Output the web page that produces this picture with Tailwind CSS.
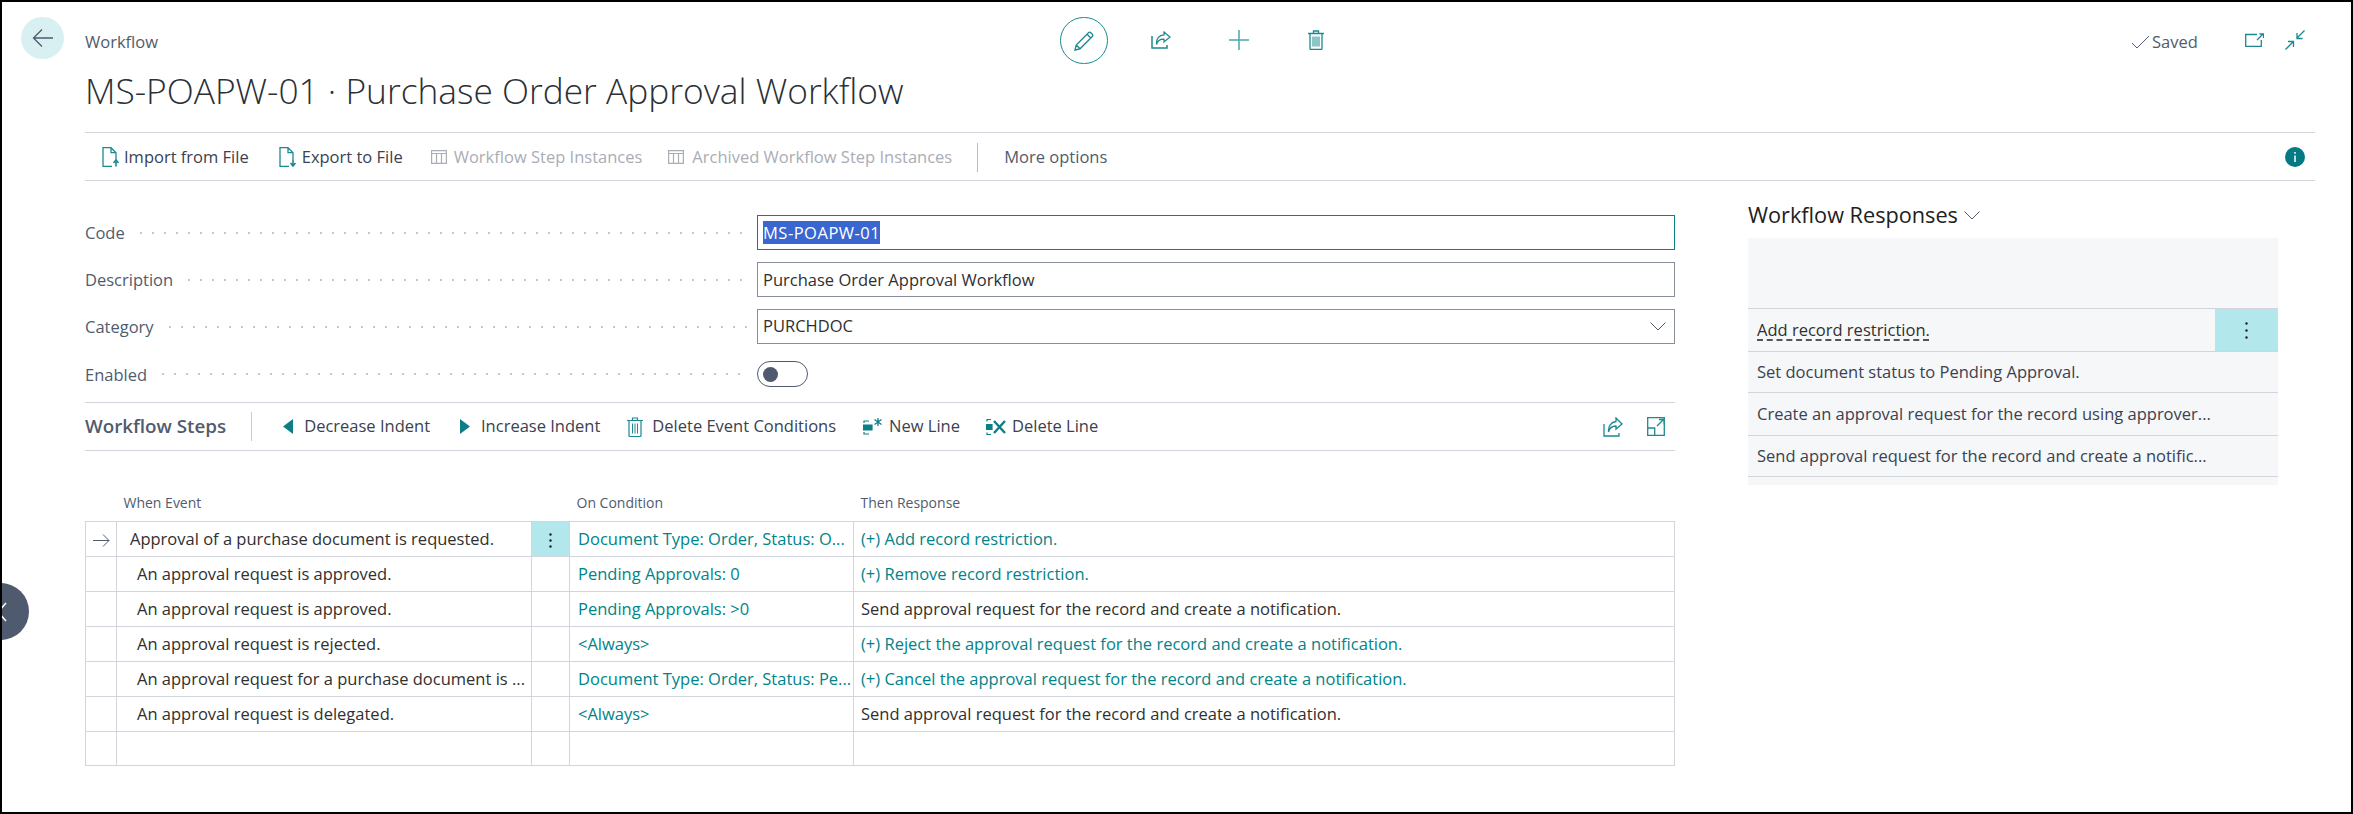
<!DOCTYPE html>
<html lang="en">
<head>
<meta charset="UTF-8">
<title>Workflow</title>
<script src="https://cdn.jsdelivr.net/npm/@tailwindcss/browser@4"></script>
</head>
<body class="bg-white">
<div class="relative w-[2353px] h-[814px] overflow-hidden border-2 border-black bg-white font-['Open_Sans',sans-serif] text-[16.5px] text-[#3a4150]">

  <!-- collapsed side tab -->
  <div class="absolute left-[-30px] top-[581px] w-[57px] h-[57px] rounded-full bg-[#505a6e]">
    <svg class="absolute left-[22px] top-[19px]" width="14" height="20" viewBox="0 0 14 20" fill="none" stroke="#fff" stroke-width="1.5"><path d="M12 1 4 10l8 9"/></svg>
  </div>

  <!-- header -->
  <div class="h-[130px]">
    <div class="flex items-start pt-[15px] h-[64px]">
      <button class="ml-[19px] w-[43px] h-[42px] rounded-full bg-[#d9f0f2] flex items-center justify-center">
        <svg width="22" height="20" viewBox="0 0 22 20" fill="none" stroke="#505a6e" stroke-width="1.3"><path d="M21 10H1.5M10 1.5 1.5 10l8.500 8.500"/></svg>
      </button>
      <span class="ml-[21px] mt-[14px] w-[975px] text-[#505c6e] leading-[22px]">Workflow</span>
      <div class="w-[48px] h-[47px] rounded-full border border-[#1a8a90] flex items-center justify-center">
        <svg width="20" height="20" viewBox="0 0 20 20" fill="none" stroke="#1a8a90" stroke-width="1.3"><path d="M1 19l1.200-5L14.500 1.700a1.600 1.600 0 0 1 2.300 0l1.500 1.500a1.600 1.600 0 0 1 0 2.300L6 17.800ZM2.200 14 6 17.800M13 3.200l3.800 3.800"/></svg>
      </div>
      <svg class="ml-[43px] mt-[14px]" width="20" height="18" viewBox="0 0 20 18" fill="none" stroke="#1a8a90" stroke-width="1.5"><path d="M1 5v12h15v-3"/><path d="M13 1l6 5-6 5V8.200C9 8 6.500 10 5.500 13.500 5 8 8 4 13 3.800Z" stroke-width="1.200"/></svg>
      <svg class="ml-[58px] mt-[13px]" width="20" height="20" viewBox="0 0 20 20" fill="none" stroke="#4aa8ad" stroke-width="1.500"><path d="M10 0v20M0 10h20"/></svg>
      <svg class="ml-[59px] mt-[13px]" width="16" height="20" viewBox="0 0 16 20" fill="none" stroke="#1a8a90" stroke-width="1.300"><path d="M0 3.500h16M5.500 3.500V1h5v2.500M2 3.500v15a1 1 0 0 0 1 1h10a1 1 0 0 0 1-1v-15"/><path d="M5 6.500v10M7 6.500v10M9 6.500v10M11 6.500v10" stroke-width="1"/></svg>
      <svg class="ml-[807px] mt-[18px]" width="19" height="14" viewBox="0 0 19 14" fill="none" stroke="#505c6e" stroke-width="1"><path d="M1 8l5 5L18 1"/></svg>
      <span class="ml-[2px] mt-[14px] w-[46px] text-[#505c6e] leading-[22px]">Saved</span>
      <svg class="ml-[47px] mt-[16px]" width="19" height="14" viewBox="0 0 19 14" fill="none" stroke="#1a8a90" stroke-width="1.300"><path d="M12 1.500H.7v12h15.600V7"/><path d="M12 7l6-6M14.500 1H18.500V5" stroke-width="1.300"/></svg>
      <svg class="ml-[21px] mt-[13px]" width="20" height="20" viewBox="0 0 20 20" fill="none" stroke="#1a8a90" stroke-width="1.300"><path d="M19.500.5 12 8M12 3v5.500h5.500M.5 19.500 8 12M3 11.500h5.500V17"/></svg>
    </div>
    <h1 class="ml-[83px] mt-[1px] font-light text-[35.3px] leading-[46px] text-[#2b2f36]">MS-POAPW-01 · Purchase Order Approval Workflow</h1>
  </div>

  <!-- action bar -->
  <div class="ml-[83px] w-[2230px] h-[49px] border-y border-[#d2d5db] flex items-center pt-[1px]">
    <svg class="ml-[17px]" width="18" height="20" viewBox="0 0 18 20" fill="none" stroke="#1a8a90" stroke-width="1.300"><path d="M10 19.300H1V.7h8l5 5v7M9 .7v5h5"/><path d="M14 19.500v-5M11.500 16l2.500-3 2.500 3" stroke-width="1.600"/></svg>
    <span class="ml-[4px]">Import from File</span>
    <svg class="ml-[30px]" width="18" height="20" viewBox="0 0 18 20" fill="none" stroke="#1a8a90" stroke-width="1.300"><path d="M10 19.300H1V.7h8l5 5v7M9 .7v5h5"/><path d="M14 12.500v5M11.500 16l2.500 3 2.500-3" stroke-width="1.600"/></svg>
    <span class="ml-[5px]">Export to File</span>
    <svg class="ml-[28px]" width="16" height="14" viewBox="0 0 16 14" fill="none" stroke="#a9adb6" stroke-width="1.200"><path d="M.6.6h14.800v12.800H.6zM.6 3.500h14.800M5.500 3.500v10M10.500 3.500v10"/></svg>
    <span class="ml-[7px] text-[#a9adb6]">Workflow Step Instances</span>
    <svg class="ml-[26px]" width="16" height="14" viewBox="0 0 16 14" fill="none" stroke="#a9adb6" stroke-width="1.200"><path d="M.6.6h14.800v12.800H.6zM.6 3.500h14.800M5.500 3.500v10M10.500 3.500v10"/></svg>
    <span class="ml-[8px] text-[#a9adb6]">Archived Workflow Step Instances</span>
    <span class="ml-[25px] h-[29px] w-px bg-[#b9bdc5]"></span>
    <span class="ml-[26px] text-[#505c6e]">More options</span>
    <svg class="ml-auto mr-[10px]" width="20" height="20" viewBox="0 0 20 20"><circle cx="10" cy="10" r="10" fill="#047a85"/><path d="M10 8.500v6.500M10 5v1.700" stroke="#fff" stroke-width="1.500"/></svg>
  </div>

  <div class="flex">
    <!-- left column -->
    <div class="ml-[83px] w-[1590px]">
      <div class="pt-[34px] flex flex-col gap-[12px]">
        <div class="flex items-center h-[35px]">
          <span class="pt-[2px] text-[#505c6e]">Code</span>
          <span class="flex-1 mx-[10px] h-[4px] bg-[radial-gradient(circle,#c3c7ce_1.100px,transparent_1.500px)] bg-[length:12px_4px] bg-repeat-x"></span>
          <div class="w-[918px] h-[35px] border border-[#0f7f85] flex items-center pl-[5px]">
            <span class="bg-[#3a66d0] text-white h-[23px] leading-[23px] tracking-[0.5px]">MS-POAPW-01</span>
          </div>
        </div>
        <div class="flex items-center h-[35px]">
          <span class="pt-[2px] text-[#505c6e]">Description</span>
          <span class="flex-1 mx-[10px] h-[4px] bg-[radial-gradient(circle,#c3c7ce_1.100px,transparent_1.500px)] bg-[length:12px_4px] bg-repeat-x"></span>
          <div class="w-[918px] h-[35px] border border-[#878e9a] flex items-center pl-[5px] pt-[1px] text-[#303030]">Purchase Order Approval Workflow</div>
        </div>
        <div class="flex items-center h-[35px]">
          <span class="pt-[2px] text-[#505c6e]">Category</span>
          <span class="flex-1 mx-[10px] h-[4px] bg-[radial-gradient(circle,#c3c7ce_1.100px,transparent_1.500px)] bg-[length:12px_4px] bg-repeat-x"></span>
          <div class="w-[918px] h-[35px] border border-[#878e9a] flex items-center justify-between pl-[5px] pr-[8px] text-[#303030]">PURCHDOC
            <svg width="16" height="9" viewBox="0 0 16 9" fill="none" stroke="#505c6e" stroke-width="1"><path d="M.5.500 8 8 15.500.500"/></svg>
          </div>
        </div>
        <div class="flex items-center h-[26px] mt-[5px]">
          <span class="pt-[2px] text-[#505c6e]">Enabled</span>
          <span class="flex-1 mx-[10px] h-[4px] bg-[radial-gradient(circle,#c3c7ce_1.100px,transparent_1.500px)] bg-[length:12px_4px] bg-repeat-x"></span>
          <div class="w-[918px] h-[26px] flex items-center">
            <span class="w-[51px] h-[26px] rounded-full border border-[#505a6e] flex items-center pl-[5px]">
              <span class="w-[15px] h-[15px] rounded-full bg-[#505a6e]"></span>
            </span>
          </div>
        </div>
      </div>

      <!-- steps toolbar -->
      <div class="mt-[15px] h-[49px] border-y border-[#d2d5db] flex items-center">
        <span class="font-semibold text-[18.8px] text-[#505c6e]">Workflow Steps</span>
        <span class="ml-[25px] h-[29px] w-px bg-[#c7cad1]"></span>
        <svg class="ml-[31px]" width="10" height="15" viewBox="0 0 10 15" fill="#0b7f85"><path d="M10 0v15L0 7.500Z"/></svg>
        <span class="ml-[11px]">Decrease Indent</span>
        <svg class="ml-[30px]" width="10" height="15" viewBox="0 0 10 15" fill="#0b7f85"><path d="M0 0v15l10-7.500Z"/></svg>
        <span class="ml-[11px]">Increase Indent</span>
        <svg class="ml-[27px]" width="16" height="20" viewBox="0 0 16 20" fill="none" stroke="#1a8a90" stroke-width="1.200"><path d="M0 3.500h16M5.500 3.500V1h5v2.500M2 3.500v15a1 1 0 0 0 1 1h10a1 1 0 0 0 1-1v-15"/><path d="M5.500 6.500v10M8 6.500v10M10.500 6.500v10" stroke-width="1"/></svg>
        <span class="ml-[9px]">Delete Event Conditions</span>
        <svg class="ml-[27px]" width="20" height="18" viewBox="0 0 20 18" fill="none" stroke="#0b7f85" stroke-width="1.200"><path d="M0 7h9v5H0z" fill="#0b7f85"/><path d="M6 3H1v2M6 16H1v-2"/><path d="M15 0v8M11.500 1.500l7 5M18.500 1.500l-7 5" stroke-width="1.300"/></svg>
        <span class="ml-[6px]">New Line</span>
        <svg class="ml-[26px]" width="20" height="18" viewBox="0 0 20 18" fill="none" stroke="#0b7f85" stroke-width="1.200"><path d="M0 6.500h6v5H0z" fill="#0b7f85"/><path d="M5 1.500H1v2M5 16.500H1v-2"/><path d="M8 3l11 12M19 3 8 15" stroke-width="2.400"/></svg>
        <span class="ml-[6px]">Delete Line</span>
        <svg class="ml-auto" width="20" height="20" viewBox="0 0 20 20" fill="none" stroke="#1a8a90" stroke-width="1.300"><path d="M1 7v12h15v-3"/><path d="M13 1l6 6-6 5V9C9 9 6.500 11 5.500 15 5 9.500 8 5 13 4.500Z"/></svg>
        <svg class="ml-[24px] mr-[10px]" width="18" height="19" viewBox="0 0 18 19" fill="none" stroke="#1a8a90" stroke-width="1.300"><path d="M.7.700h16.600v17.600H.7zM.7 11h7v7.300M10 9l6-6M12 2.500h5v5"/></svg>
      </div>

      <!-- steps table -->
      <table class="mt-[20px] w-[1590px] table-fixed border-collapse text-[#303030]">
        <colgroup><col class="w-[31px]"><col class="w-[415px]"><col class="w-[38px]"><col class="w-[284px]"><col></colgroup>
        <thead>
          <tr class="h-[50px] text-[14px] font-normal text-[#505c6e]">
            <th></th>
            <th class="pl-[7px] pb-[8px] align-bottom text-left font-normal">When Event</th>
            <th></th>
            <th class="pl-[7px] pb-[8px] align-bottom text-left font-normal">On Condition</th>
            <th class="pl-[7px] pb-[8px] align-bottom text-left font-normal">Then Response</th>
          </tr>
        </thead>
        <tbody class="[&_td]:pt-[2px]">
          <tr class="h-[35px]">
            <td class="border border-[#d2d5db] text-center"><svg class="inline" width="17" height="13" viewBox="0 0 17 13" fill="none" stroke="#505c6e" stroke-width="1"><path d="M0 6.500h16M10 .5l6 6-6 6"/></svg></td>
            <td class="border border-[#d2d5db] pl-[13px] whitespace-nowrap">Approval of a purchase document is requested.</td>
            <td class="border border-[#d2d5db] bg-[#b2e8ec] text-center"><svg class="inline" width="3" height="15" viewBox="0 0 3 15" fill="#212121"><circle cx="1.500" cy="1.500" r="1.200"/><circle cx="1.500" cy="7.500" r="1.200"/><circle cx="1.500" cy="13.500" r="1.200"/></svg></td>
            <td class="border border-[#d2d5db] pl-[8px] text-[#00848a] whitespace-nowrap">Document Type: Order, Status: O...</td>
            <td class="border border-[#d2d5db] pl-[7px] text-[#00848a]">(+) Add record restriction.</td>
          </tr>
          <tr class="h-[35px]">
            <td class="border border-[#d2d5db]"></td>
            <td class="border border-[#d2d5db] pl-[20px] whitespace-nowrap">An approval request is approved.</td>
            <td class="border border-[#d2d5db]"></td>
            <td class="border border-[#d2d5db] pl-[8px] text-[#00848a] whitespace-nowrap">Pending Approvals: 0</td>
            <td class="border border-[#d2d5db] pl-[7px] text-[#00848a]">(+) Remove record restriction.</td>
          </tr>
          <tr class="h-[35px]">
            <td class="border border-[#d2d5db]"></td>
            <td class="border border-[#d2d5db] pl-[20px] whitespace-nowrap">An approval request is approved.</td>
            <td class="border border-[#d2d5db]"></td>
            <td class="border border-[#d2d5db] pl-[8px] text-[#00848a] whitespace-nowrap">Pending Approvals: &gt;0</td>
            <td class="border border-[#d2d5db] pl-[7px]">Send approval request for the record and create a notification.</td>
          </tr>
          <tr class="h-[35px]">
            <td class="border border-[#d2d5db]"></td>
            <td class="border border-[#d2d5db] pl-[20px] whitespace-nowrap">An approval request is rejected.</td>
            <td class="border border-[#d2d5db]"></td>
            <td class="border border-[#d2d5db] pl-[8px] text-[#00848a] whitespace-nowrap">&lt;Always&gt;</td>
            <td class="border border-[#d2d5db] pl-[7px] text-[#00848a]">(+) Reject the approval request for the record and create a notification.</td>
          </tr>
          <tr class="h-[35px]">
            <td class="border border-[#d2d5db]"></td>
            <td class="border border-[#d2d5db] pl-[20px] whitespace-nowrap">An approval request for a purchase document is ...</td>
            <td class="border border-[#d2d5db]"></td>
            <td class="border border-[#d2d5db] pl-[8px] text-[#00848a] whitespace-nowrap">Document Type: Order, Status: Pe...</td>
            <td class="border border-[#d2d5db] pl-[7px] text-[#00848a]">(+) Cancel the approval request for the record and create a notification.</td>
          </tr>
          <tr class="h-[35px]">
            <td class="border border-[#d2d5db]"></td>
            <td class="border border-[#d2d5db] pl-[20px] whitespace-nowrap">An approval request is delegated.</td>
            <td class="border border-[#d2d5db]"></td>
            <td class="border border-[#d2d5db] pl-[8px] text-[#00848a] whitespace-nowrap">&lt;Always&gt;</td>
            <td class="border border-[#d2d5db] pl-[7px]">Send approval request for the record and create a notification.</td>
          </tr>
          <tr class="h-[34px]">
            <td class="border border-[#d2d5db]"></td>
            <td class="border border-[#d2d5db]"></td>
            <td class="border border-[#d2d5db]"></td>
            <td class="border border-[#d2d5db]"></td>
            <td class="border border-[#d2d5db]"></td>
          </tr>
        </tbody>
      </table>
    </div>

    <!-- right column -->
    <div class="ml-[73px] w-[530px]">
      <div class="mt-[21px] h-[26px] flex items-center gap-[6px] text-[21.7px] text-[#212121]">Workflow Responses
        <svg width="16" height="9" viewBox="0 0 16 9" fill="none" stroke="#505c6e" stroke-width="1"><path d="M.5.500 8 8 15.500.500"/></svg>
      </div>
      <div class="mt-[10px] h-[247px] bg-[#f6f7f9] text-[#3a4150]">
        <div class="h-[70px]"></div>
        <div class="relative h-[44px] border-y border-[#d2d5db] flex items-center pl-[9px]">
          <span class="underline decoration-dashed decoration-[#212121] underline-offset-[4px] text-[#303030]">Add record restriction.</span>
          <span class="absolute right-0 top-0 bottom-0 w-[63px] bg-[#b2e8ec] flex items-center justify-center">
            <svg width="3" height="17" viewBox="0 0 3 17" fill="#212121"><circle cx="1.500" cy="1.500" r="1.200"/><circle cx="1.500" cy="8.500" r="1.200"/><circle cx="1.500" cy="15.500" r="1.200"/></svg>
          </span>
        </div>
        <div class="h-[41px] border-b border-[#d2d5db] flex items-center pl-[9px]">Set document status to Pending Approval.</div>
        <div class="h-[43px] border-b border-[#d2d5db] flex items-center pl-[9px]">Create an approval request for the record using approver...</div>
        <div class="h-[41px] border-b border-[#d2d5db] flex items-center pl-[9px]">Send approval request for the record and create a notific...</div>
      </div>
    </div>
  </div>
</div>
</body>
</html>
